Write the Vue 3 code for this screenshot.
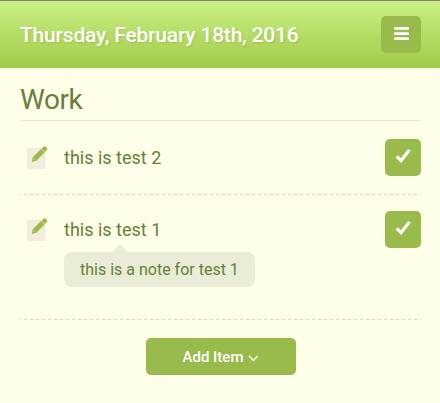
<script setup>
const items = [
  { id: 2, title: 'this is test 2', note: '' },
  { id: 1, title: 'this is test 1', note: 'this is a note for test 1' },
]
</script>

<template>
  <div class="app">
    <header class="bar">
      <div class="date"><span>Thursday, February 18th, 2016</span></div>
      <button class="menu" aria-label="Menu">
        <svg width="15" height="13" viewBox="0 0 15 13">
          <g fill="#fff">
            <rect width="15" height="2.7" rx="1" />
            <rect y="5.2" width="15" height="2.7" rx="1" />
            <rect y="10.2" width="15" height="2.7" rx="1" />
          </g>
        </svg>
      </button>
    </header>
    <main class="list">
      <h1 class="heading"><span>Work</span></h1>
      <section v-for="item in items" :key="item.id" class="item" :class="{ noted: item.note }">
        <svg class="edit" width="22" height="24" viewBox="0 0 22 24">
          <rect x="1" y="3" width="18.5" height="21" fill="#f3eddd" />
          <path d="M5.6 17 6.8 12.3 15 4.1 18.6 7.6 10.4 15.7Z" fill="#99bb4c" />
          <path d="M15.4 3.8 17.6 1.6Q18.5 .8 19.5 1.6L20.9 3Q21.8 3.9 20.9 4.8L18.9 7Z" fill="#99bb4c" />
          <path d="M7.4 13.5 9 15" stroke="#e5e9bd" stroke-width=".7" />
        </svg>
        <div class="body">
          <div class="title"><span>{{ item.title }}</span></div>
          <div v-if="item.note" class="note"><span>{{ item.note }}</span></div>
        </div>
        <button class="done" aria-label="Done">
          <svg width="16" height="14" viewBox="0 0 16 14">
            <path d="M1.7 7.4 6.1 11.6 14.4 1" fill="none" stroke="#fff" stroke-width="3.2" />
          </svg>
        </button>
      </section>
      <button class="add">
        <span class="label">Add Item</span>
        <svg width="11" height="7" viewBox="0 0 11 7">
          <path d="M1 1 5.4 5.3 9.8 1" fill="none" stroke="#fff" stroke-width="1.3" />
        </svg>
      </button>
    </main>
  </div>
</template>

<style>
body {
  background: #ffffe9;
}
</style>

<style scoped>
.app {
  box-sizing: border-box;
  height: 403px;
  background: #ffffe9;
  color: #66803a;
  font-family: Roboto, "Liberation Sans", sans-serif;
}
button {
  display: flex;
  align-items: center;
  justify-content: center;
  box-sizing: border-box;
  height: 37px;
  padding: 0;
  border: 0;
  border-radius: 5px;
  background: #99bb4c;
  color: #fff;
  font: inherit;
}
svg {
  display: block;
}
.bar {
  display: flex;
  align-items: flex-start;
  justify-content: space-between;
  box-sizing: border-box;
  height: 68px;
  padding: 15px 19px 0 20px;
  border-top: 1px solid #808075;
  background: linear-gradient(#caee84, #a1cc48);
}
.date {
  height: 37px;
  color: #fff;
  font-size: 21px;
  font-weight: 500;
  letter-spacing: -0.2px;
  line-height: 38px;
  white-space: nowrap;
  text-shadow: 1px 1px 2px rgba(90, 110, 40, 0.22);
}
.menu {
  width: 40px;
  padding-bottom: 2px;
}
.list {
  padding: 0 19px 0 20px;
}
.heading {
  box-sizing: border-box;
  height: 53px;
  margin: 0;
  padding-top: 15px;
  border-bottom: 1px solid #e5e9d5;
  font-size: 28px;
  font-weight: 400;
  letter-spacing: -0.5px;
  line-height: 34px;
}
.item {
  display: flex;
  align-items: flex-start;
  box-sizing: border-box;
  height: 74px;
  padding-top: 18px;
  background: repeating-linear-gradient(90deg, #d3d8c0 0 1px, transparent 1px 4px, #d3d8c0 4px 6px) bottom / 100% 1px no-repeat;
}
.item.noted {
  height: 125px;
  padding-top: 16px;
}
.edit {
  margin: 6px 16px 0 6px;
}
.body {
  display: flex;
  flex: 1;
  flex-direction: column;
  align-items: flex-start;
}
.title {
  height: 37px;
  font-size: 18px;
  line-height: 37px;
}
.note {
  position: relative;
  height: 35px;
  margin-top: 4px;
  padding: 0 16px;
  border-radius: 8px;
  background: #eaecd8;
  font-size: 16px;
  line-height: 35px;
  white-space: nowrap;
}
.note::before {
  content: "";
  position: absolute;
  top: -8px;
  left: 48px;
  border: solid transparent;
  border-width: 0 8px 8px;
  border-bottom-color: #eaecd8;
}
.done {
  width: 36px;
  padding-bottom: 3px;
}
.add {
  gap: 5px;
  width: 150px;
  margin: 18px auto 0 126px;
  font-size: 15px;
  font-weight: 500;
}
.add svg {
  margin-top: 4px;
}
</style>
